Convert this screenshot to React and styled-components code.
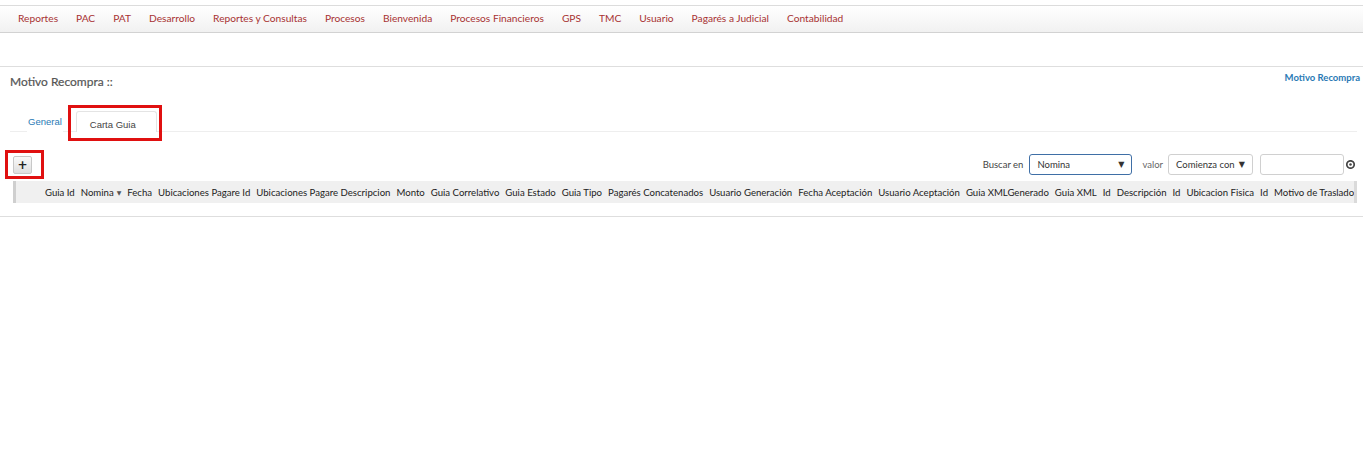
import React from "react";
import styled, { createGlobalStyle } from "styled-components";

const Global = createGlobalStyle`
  html, body { margin: 0; padding: 0; background: #fff; }
  body { font-family: "Lato", "Open Sans", sans-serif; color: #333; }
  * { box-sizing: border-box; }
`;

const Page = styled.div`
  padding-top: 5px;
`;

const NavBar = styled.nav`
  height: 28px;
  border-top: 1px solid #dcdcdc;
  border-bottom: 1px solid #d2d2d2;
  background: linear-gradient(#ffffff, #f1f1f1);
  display: flex;
  align-items: center;
  padding-left: 9px;
  padding-bottom: 3px;
`;

const NavItem = styled.a`
  font-size: 10.2px;
  color: #a83232;
  padding: 0 9px;
  text-decoration: none;
  white-space: nowrap;
`;

const Spacer = styled.div`
  height: 34px;
  border-bottom: 1px solid #dedede;
`;

const Content = styled.section`
  padding: 0 3px 13px 10px;
  border-bottom: 1px solid #dedede;
`;

const TitleRow = styled.div`
  display: flex;
  justify-content: space-between;
  align-items: flex-start;
  padding-top: 5px;
  height: 44px;
`;

const Title = styled.h2`
  margin: 0;
  padding-top: 2px;
  font-size: 12px;
  font-weight: normal;
  color: #555;
  -webkit-text-stroke: 0.2px #555;
`;

const Crumb = styled.a`
  font-size: 9.5px;
  font-weight: bold;
  color: #2a7ab5;
  text-decoration: none;
`;

const Tabs = styled.div`
  display: flex;
  align-items: flex-end;
  border-bottom: 1px solid #eeeeee;
  margin-right: 3px;
  padding-left: 17px;
  height: 21px;
`;

const Tab = styled.div`
  font-family: "Liberation Sans", Arial, sans-serif;
  font-size: 9.5px;
  line-height: 12px;
  color: ${(p) => (p.$active ? "#444" : "#2a7ab5")};
  padding: ${(p) => (p.$active ? "7px 0 2px 13px" : "0 0 4px 0")};
  margin-right: ${(p) => (p.$active ? "0" : "13px")};
  background: #fff;
  border: 1px solid ${(p) => (p.$active ? "#e4e4e4" : "transparent")};
  border-bottom: none;
  border-radius: 3px 3px 0 0;
  margin-bottom: -1px;
  width: ${(p) => (p.$active ? "81px" : "auto")};
  height: ${(p) => (p.$active ? "21px" : "auto")};
`;

const Highlight = styled.div`
  position: relative;
  &::after {
    content: "";
    position: absolute;
    top: ${(p) => p.$t};
    left: ${(p) => p.$l};
    right: ${(p) => p.$r};
    bottom: ${(p) => p.$b};
    border: 3px solid #e01010;
    pointer-events: none;
  }
`;

const Toolbar = styled.div`
  display: flex;
  justify-content: space-between;
  align-items: center;
  margin-top: 20px;
  height: 25px;
  padding-left: 3px;
`;

const AddButton = styled.button`
  width: 19px;
  height: 18px;
  padding: 0;
  border: 1px solid #c8c8c8;
  border-radius: 2px;
  background: linear-gradient(#fafafa, #dedede);
  display: flex;
  align-items: center;
  justify-content: center;
  font-family: "DejaVu Sans", sans-serif;
  font-size: 12px;
  font-weight: bold;
  line-height: 1;
  color: #222;
`;

const Search = styled.div`
  display: flex;
  align-items: center;
  font-size: 9.5px;
  color: #444;
`;

const Label = styled.span`
  margin: 0 ${(p) => p.$mr || "6px"} 0 ${(p) => p.$ml || "0"};
  color: ${(p) => p.$c || "#444"};
`;

const Select = styled.div`
  width: ${(p) => p.$w};
  height: 21px;
  border: 1px solid ${(p) => (p.$focus ? "#3f6fa6" : "#d0d0d0")};
  border-radius: 3px;
  display: flex;
  align-items: center;
  justify-content: space-between;
  padding: 0 7px 0 7px;
  font-size: 9.5px;
  color: #333;
  background: #fff;
`;

const Arrow = styled.span`
  font-family: "DejaVu Sans", sans-serif;
  font-size: 8px;
  color: #333;
`;

const TextInput = styled.div`
  width: 84px;
  height: 21px;
  border: 1px solid #d0d0d0;
  border-radius: 3px;
  margin-left: 7px;
`;

const ClearIcon = styled.svg`
  margin-left: 2px;
  margin-right: 5px;
`;

const HeaderRow = styled.div`
  margin-top: 4px;
  margin-left: 3px;
  margin-right: 3px;
  height: 22px;
  background: #f0f0f0;
  border-left: 3px solid #cfcfcf;
  border-right: 3px solid #dadada;
  display: flex;
  align-items: center;
  padding-left: 26px;
  overflow: hidden;
`;

const HeadCell = styled.div`
  font-size: 9.6px;
  color: #222;
  padding: 0 3px;
  white-space: nowrap;
`;

const SortMark = styled.span`
  font-family: "DejaVu Sans", sans-serif;
  font-size: 6px;
  color: #555;
  margin-left: 3px;
  vertical-align: 1px;
`;

const cols = [
  "Guia Id",
  "Nomina",
  "Fecha",
  "Ubicaciones Pagare Id",
  "Ubicaciones Pagare Descripcion",
  "Monto",
  "Guia Correlativo",
  "Guia Estado",
  "Guia Tipo",
  "Pagarés Concatenados",
  "Usuario Generación",
  "Fecha Aceptación",
  "Usuario Aceptación",
  "Guia XMLGenerado",
  "Guia XML",
  "Id",
  "Descripción",
  "Id",
  "Ubicacion Fisica",
  "Id",
  "Motivo de Traslado",
];

const menu = [
  "Reportes",
  "PAC",
  "PAT",
  "Desarrollo",
  "Reportes y Consultas",
  "Procesos",
  "Bienvenida",
  "Procesos Financieros",
  "GPS",
  "TMC",
  "Usuario",
  "Pagarés a Judicial",
  "Contabilidad",
];

export default function App() {
  return (
    <Page>
      <Global />
      <NavBar>
        {menu.map((m) => (
          <NavItem key={m}>{m}</NavItem>
        ))}
      </NavBar>
      <Spacer />
      <Content>
        <TitleRow>
          <Title>Motivo Recompra ::</Title>
          <Crumb>Motivo Recompra</Crumb>
        </TitleRow>
        <Tabs>
          <Tab>General</Tab>
          <Highlight $t="-6px" $l="-8px" $r="-5px" $b="-10px">
            <Tab $active>Carta Guia</Tab>
          </Highlight>
        </Tabs>
        <Toolbar>
          <Highlight $t="-6px" $l="-8px" $r="-12px" $b="-5px">
            <AddButton>+</AddButton>
          </Highlight>
          <Search>
            <Label>Buscar en</Label>
            <Select $w="103px" $focus>
              <span>Nomina</span>
              <Arrow>▼</Arrow>
            </Select>
            <Label $ml="10px" $mr="5px" $c="#666">valor</Label>
            <Select $w="85px">
              <span>Comienza con</span>
              <Arrow>▼</Arrow>
            </Select>
            <TextInput />
            <ClearIcon width="9" height="9" viewBox="0 0 10 10">
              <circle cx="5" cy="5" r="4.1" fill="none" stroke="#444" strokeWidth="1.9" />
              <circle cx="5" cy="5" r="1.4" fill="#444" />
            </ClearIcon>
          </Search>
        </Toolbar>
        <HeaderRow>
          {cols.map((c, i) => (
            <HeadCell key={i}>
              {c}
              {c === "Nomina" && <SortMark>▼</SortMark>}
            </HeadCell>
          ))}
        </HeaderRow>
      </Content>
    </Page>
  );
}
